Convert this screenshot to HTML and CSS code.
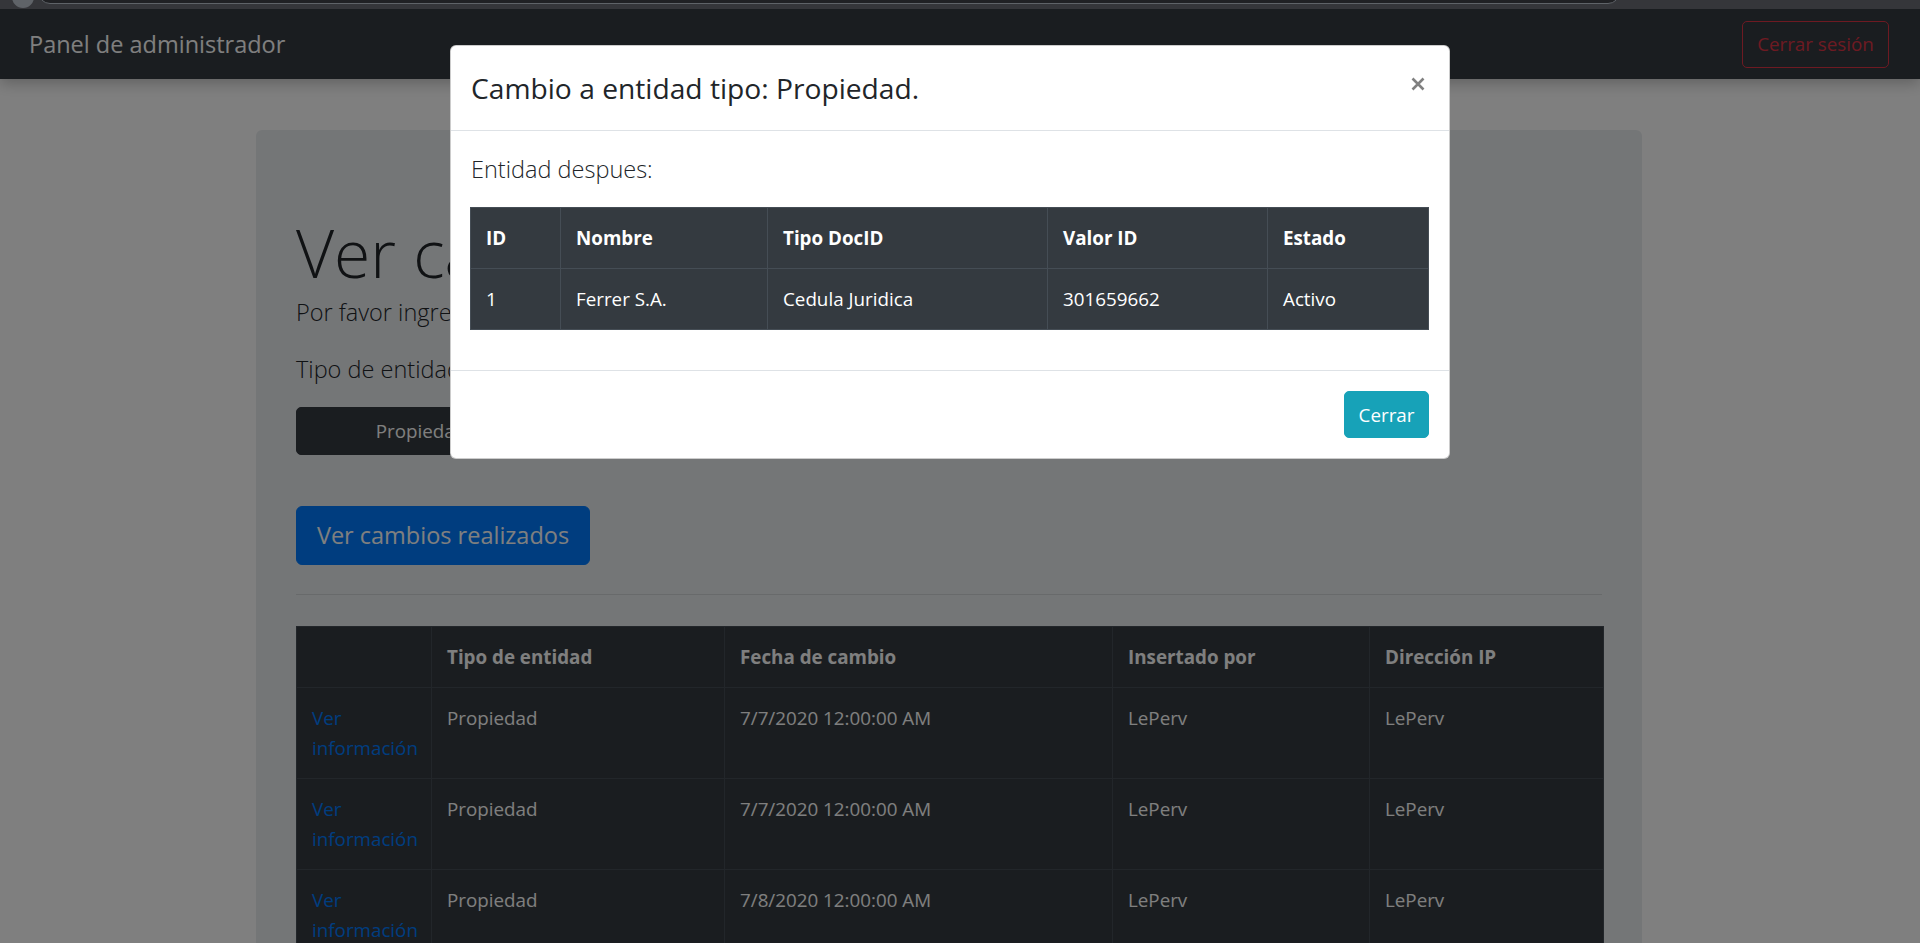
FILE: index.html
```html
<!DOCTYPE html>
<html lang="es">
<head>
<meta charset="utf-8">
<title>Panel de administrador</title>
<link rel="stylesheet" href="styles.css">
</head>
<body>
<div class="chrome">
  <span class="chrome-dot"></span>
  <span class="chrome-bar"></span>
</div>
<div class="viewport">
  <nav class="navbar">
    <span class="brand">Panel de administrador</span>
    <button class="btn btn-outline-danger">Cerrar sesión</button>
  </nav>

  <main class="container">
    <div class="jumbotron">
      <h1 class="display">Ver cambios</h1>
      <p class="lead intro">Por favor ingrese el tipo de entidad para ver los cambios.</p>
      <p class="lead label">Tipo de entidad:</p>
      <div class="btn-group">
        <button class="btn btn-dark">Propiedad</button>
        <button class="btn btn-dark">Propietario</button>
        <button class="btn btn-dark">Usuario</button>
      </div>
      <button class="btn btn-primary btn-lg">Ver cambios realizados</button>
      <hr class="divider">
      <table class="table-dark main-table">
        <thead>
          <tr>
            <th class="c1"></th>
            <th class="c2">Tipo de entidad</th>
            <th class="c3">Fecha de cambio</th>
            <th class="c4">Insertado por</th>
            <th class="c5">Dirección IP</th>
          </tr>
        </thead>
        <tbody>
          <tr>
            <td><a href="#">Ver información</a></td>
            <td>Propiedad</td>
            <td>7/7/2020 12:00:00 AM</td>
            <td>LePerv</td>
            <td>LePerv</td>
          </tr>
          <tr>
            <td><a href="#">Ver información</a></td>
            <td>Propiedad</td>
            <td>7/7/2020 12:00:00 AM</td>
            <td>LePerv</td>
            <td>LePerv</td>
          </tr>
          <tr>
            <td><a href="#">Ver información</a></td>
            <td>Propiedad</td>
            <td>7/8/2020 12:00:00 AM</td>
            <td>LePerv</td>
            <td>LePerv</td>
          </tr>
          <tr>
            <td><a href="#">Ver información</a></td>
            <td>Propiedad</td>
            <td>7/8/2020 12:00:00 AM</td>
            <td>LePerv</td>
            <td>LePerv</td>
          </tr>
        </tbody>
      </table>
    </div>
  </main>

  <div class="backdrop"></div>

  <div class="modal">
    <div class="modal-header">
      <h4 class="modal-title">Cambio a entidad tipo: Propiedad.</h4>
      <button class="close" aria-label="Close">
        <svg width="14" height="14" viewBox="0 0 14 14"><path d="M1.5 1.5 L12.5 12.5 M12.5 1.5 L1.5 12.5" stroke="#808080" stroke-width="2.6" stroke-linecap="butt" fill="none"/></svg>
      </button>
    </div>
    <div class="modal-body">
      <p class="lead">Entidad despues:</p>
      <table class="table-dark modal-table">
        <thead>
          <tr>
            <th class="m1">ID</th>
            <th class="m2">Nombre</th>
            <th class="m3">Tipo DocID</th>
            <th class="m4">Valor ID</th>
            <th class="m5">Estado</th>
          </tr>
        </thead>
        <tbody>
          <tr>
            <td>1</td>
            <td>Ferrer S.A.</td>
            <td>Cedula Juridica</td>
            <td>301659662</td>
            <td>Activo</td>
          </tr>
        </tbody>
      </table>
    </div>
    <div class="modal-footer">
      <button class="btn btn-info">Cerrar</button>
    </div>
  </div>
</div>
</body>
</html>
```
FILE: styles.css
```css
* { box-sizing: border-box; }

html, body {
  margin: 0;
  height: 100%;
  overflow: hidden;
}

body {
  font-family: "Segoe UI", "Open Sans", "Noto Sans", sans-serif;
  font-size: 18.8px;
  line-height: 30px;
  color: #212529;
  background: #fff;
}

/* browser chrome strip */
.chrome {
  height: 9px;
  background: #35363a;
  position: relative;
  overflow: hidden;
}
.chrome-dot {
  position: absolute;
  left: 12px;
  top: -14px;
  width: 22px;
  height: 22px;
  border-radius: 50%;
  background: #5f6368;
}
.chrome-bar {
  position: absolute;
  left: 38px;
  top: -20px;
  width: 1582px;
  height: 24px;
  border-radius: 12px;
  background: #202124;
  border: 1px solid #5f6368;
}

.viewport {
  position: relative;
  height: 934px;
  overflow: hidden;
}

/* navbar */
.navbar {
  height: 70px;
  background: #343a40;
  display: flex;
  align-items: center;
  justify-content: space-between;
  padding: 0 31px 0 29px;
  box-shadow: 0 4px 14px rgba(0, 0, 0, .25);
  position: relative;
}
.brand {
  font-size: 23.5px;
  color: #fff;
  line-height: 37px;
}

/* buttons */
.btn {
  font-family: inherit;
  font-size: 18.8px;
  line-height: 30px;
  padding: 7px 15px;
  border: 1px solid transparent;
  border-radius: 5px;
  background: transparent;
  white-space: nowrap;
  cursor: pointer;
}
.btn-outline-danger {
  color: #dc3545;
  border-color: #dc3545;
  height: 47px;
  width: 147px;
  padding: 7px 0;
}
.btn-dark {
  background: #343a40;
  border-color: #343a40;
  color: #fff;
  width: 250px;
  height: 48px;
  border-radius: 0;
}
.btn-group {
  display: flex;
  margin-bottom: 51px;
}
.btn-group .btn:first-child { border-radius: 5px 0 0 5px; }
.btn-group .btn:last-child { border-radius: 0 5px 5px 0; }
.btn-primary {
  background: #007bff;
  border-color: #007bff;
  color: #fff;
}
.btn-lg {
  font-size: 23.5px;
  line-height: 37px;
  padding: 10px 0;
  height: 59px;
  width: 294px;
  border-radius: 6px;
  display: block;
}
.btn-info {
  background: #17a2b8;
  border-color: #17a2b8;
  color: #fff;
  width: 85px;
  height: 47px;
  padding: 7px 0;
}

/* jumbotron */
.container {
  width: 1386px;
  margin: 51px 0 0 256px;
}
.jumbotron {
  background: #e9ecef;
  border-radius: 6px;
  padding: 80px 40px;
}
.display {
  font-size: 66px;
  font-weight: 300;
  line-height: 84px;
  margin: 0;
}
.lead {
  font-size: 23.5px;
  font-weight: 300;
  line-height: 37px;
  margin: 0 0 20px 0;
}
.intro { margin-bottom: 20px; }
.label { margin-bottom: 19px; }

.divider {
  border: 0;
  border-top: 1px solid rgba(0, 0, 0, .1);
  margin: 29px 0 31px 0;
}

/* tables */
table {
  border-collapse: collapse;
  table-layout: fixed;
}
.table-dark {
  background: #343a40;
  color: #fff;
}
.table-dark th,
.table-dark td {
  border: 1px solid #454d55;
  padding: 15px;
  text-align: left;
  vertical-align: top;
  font-size: 18.8px;
  line-height: 30px;
}
.table-dark th { font-weight: 700; }

.main-table { width: 1307px; }
.main-table a { color: #007bff; text-decoration: none; }
.c1 { width: 135px; }
.c2 { width: 293px; }
.c3 { width: 388px; }
.c4 { width: 257px; }
.c5 { width: 234px; }

/* backdrop + modal */
.backdrop {
  position: absolute;
  inset: 0;
  background: rgba(0, 0, 0, .5);
}
.modal {
  position: absolute;
  top: 36px;
  left: 450px;
  width: 1000px;
  background: #fff;
  border: 1px solid rgba(0, 0, 0, .2);
  border-radius: 6px;
}
.modal-header {
  display: flex;
  align-items: flex-start;
  justify-content: space-between;
  padding: 20px;
  border-bottom: 1px solid #dee2e6;
}
.modal-title {
  margin: 0;
  font-size: 28.2px;
  font-weight: 400;
  line-height: 44px;
}
.close {
  border: 0;
  background: transparent;
  padding: 0;
  margin: 11px 4px 0 0;
  width: 14px;
  height: 14px;
  display: block;
}
.close svg { display: block; }
.modal-body {
  padding: 20px 20px 20px 19px;
}
.modal-body .lead {
  margin-bottom: 19px;
  padding-left: 1px;
}
.modal-table {
  width: 958px;
  margin-bottom: 20px;
}
.m1 { width: 90px; }
.m2 { width: 207px; }
.m3 { width: 280px; }
.m4 { width: 220px; }
.m5 { width: 161px; }
.modal-footer {
  display: flex;
  justify-content: flex-end;
  padding: 20px;
  border-top: 1px solid #dee2e6;
}
```
